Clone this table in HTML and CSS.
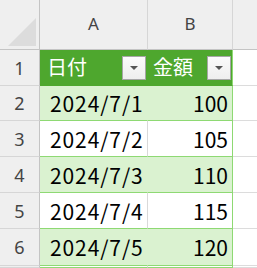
FILE: index.html
```html
<!DOCTYPE html>
<html lang="ja">
<head>
<meta charset="utf-8">
<link rel="stylesheet" href="styles.css">
</head>
<body>
<div class="sheet">
  <div class="cell corner">
    <svg class="corner-mark" width="40" height="49" viewBox="0 0 40 49"><polygon points="8,46 36,46 36,18" fill="#dcdcdc"/><rect x="39" y="14" width="1" height="1" fill="#000"/></svg>
  </div>
  <div class="cell colhead">A</div>
  <div class="cell colhead">B</div>
  <div class="cell colhead last">&nbsp;</div>

  <div class="cell rowhead">1</div>
  <div class="cell thead a"><span class="htext">日付</span><span class="filter"><span class="tri"></span></span></div>
  <div class="cell thead b"><span class="htext">金額</span><span class="filter"><span class="tri"></span></span></div>
  <div class="cell blank"></div>

  <div class="cell rowhead">2</div>
  <div class="cell data a band">2024/7/1</div>
  <div class="cell data b band">100</div>
  <div class="cell blank"></div>

  <div class="cell rowhead">3</div>
  <div class="cell data a plain">2024/7/2</div>
  <div class="cell data b plain">105</div>
  <div class="cell blank"></div>

  <div class="cell rowhead">4</div>
  <div class="cell data a band">2024/7/3</div>
  <div class="cell data b band">110</div>
  <div class="cell blank"></div>

  <div class="cell rowhead">5</div>
  <div class="cell data a plain">2024/7/4</div>
  <div class="cell data b plain">115</div>
  <div class="cell blank"></div>

  <div class="cell rowhead">6</div>
  <div class="cell data a band">2024/7/5</div>
  <div class="cell data b band">120</div>
  <div class="cell blank"></div>

  <div class="cell rowhead"></div>
  <div class="cell data a plain"></div>
  <div class="cell data b plain"></div>
  <div class="cell blank"></div>
</div>
</body>
</html>
```
FILE: styles.css
```css
html, body {
  margin: 0;
  padding: 0;
  background: #ffffff;
  overflow: hidden;
}
.sheet {
  display: grid;
  grid-template-columns: 40px 108px 85px 1fr;
  grid-template-rows: 50px 36px 35px 36px 36px 36px 37px 2px;
  width: 257px;
  height: 268px;
  font-family: "Noto Sans CJK JP", "Noto Sans", sans-serif;
}
.cell {
  box-sizing: border-box;
  display: flex;
  align-items: center;
  min-width: 0;
  overflow: hidden;
}
.corner {
  background: #efefef;
  border-right: 1px solid #c4c4c4;
  border-bottom: 1px solid #c4c4c4;
  position: relative;
}
.corner-mark {
  position: absolute;
  left: 0;
  top: 0;
}
.colhead {
  background: #efefef;
  border-right: 1px solid #d6d6d6;
  border-bottom: 1px solid #c4c4c4;
  justify-content: center;
  color: #444444;
  font-family: "Noto Sans", sans-serif;
  font-size: 17px;
  padding-bottom: 2px;
}
.colhead.last {
  border-right: none;
}
.rowhead {
  background: #efefef;
  border-right: 1px solid #c4c4c4;
  border-bottom: 1px solid #d6d6d6;
  justify-content: center;
  color: #444444;
  font-family: "Noto Sans", sans-serif;
  font-size: 18px;
}
.thead {
  background: #4ea72e;
  color: #ffffff;
  font-size: 20px;
  justify-content: space-between;
  padding-left: 7px;
  padding-right: 1px;
  border-bottom: 1px solid #4ea72e;
}
.thead.a {
  border-right: 1px solid #4ea72e;
}
.thead.b {
  border-right: 1px solid #8ed973;
  padding-left: 5px;
}
.htext {
  line-height: 1;
  margin-top: -2px;
}
.filter {
  width: 24px;
  height: 24px;
  box-sizing: border-box;
  border: 1px solid #a6a6a6;
  background: linear-gradient(#fbfbfb, #eeeeee);
  display: flex;
  align-items: center;
  justify-content: center;
  margin-top: 1px;
}
.tri {
  width: 0;
  height: 0;
  border-left: 4px solid transparent;
  border-right: 4px solid transparent;
  border-top: 4px solid #555555;
}
.data {
  color: #000000;
  font-size: 21px;
  border-bottom: 1px solid #8ed973;
}
.data.a {
  padding-left: 10px;
  letter-spacing: 0.9px;
}
.data.b {
  justify-content: flex-end;
  padding-right: 4px;
  border-right: 1px solid #8ed973;
}
.band {
  background: #daf2d0;
}
.plain {
  background: #ffffff;
}
.data.a.band {
  border-right: 1px solid #daf2d0;
}
.data.a.plain {
  border-right: 1px solid #d9d9d9;
}
.blank {
  background: #ffffff;
  border-bottom: 1px solid #dcdcdc;
}
```
